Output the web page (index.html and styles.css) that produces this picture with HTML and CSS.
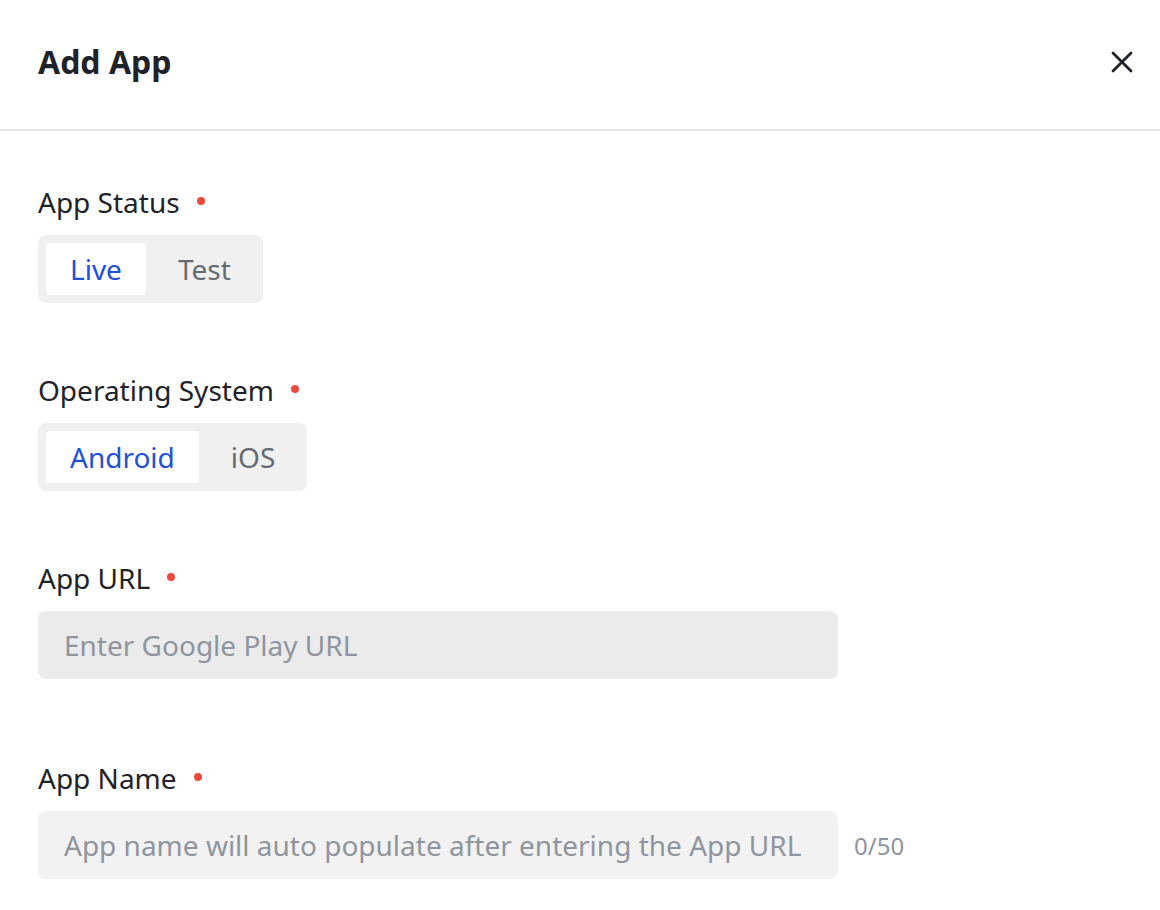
FILE: index.html
```html
<!DOCTYPE html>
<html lang="en">
<head>
<meta charset="UTF-8" />
<meta name="viewport" content="width=device-width, initial-scale=1" />
<title>Add App</title>
<link rel="stylesheet" href="styles.css">
</head>
<body>
  <div class="drawer">
    <div class="drawer-header">
      <h1>Add App</h1>
      <button class="close-btn" aria-label="Close">
        <svg width="22" height="22" viewBox="0 0 22 22">
          <path d="M2 2L20 20M20 2L2 20" stroke="#1f2329" stroke-width="2.8" stroke-linecap="round" />
        </svg>
      </button>
    </div>

    <div class="drawer-body">
      <div class="field">
        <label class="field-label">App Status <span class="required"></span></label>
        <div class="segmented">
          <button class="seg-item active">Live</button>
          <button class="seg-item">Test</button>
        </div>
      </div>

      <div class="field">
        <label class="field-label">Operating System <span class="required"></span></label>
        <div class="segmented">
          <button class="seg-item active">Android</button>
          <button class="seg-item">iOS</button>
        </div>
      </div>

      <div class="field field-url">
        <label class="field-label">App URL <span class="required"></span></label>
        <input type="text" class="text-input" placeholder="Enter Google Play URL" />
      </div>

      <div class="field">
        <label class="field-label">App Name <span class="required"></span></label>
        <div class="input-row">
          <input type="text" class="text-input light" placeholder="App name will auto populate after entering the App URL" />
          <span class="counter">0/50</span>
        </div>
      </div>
    </div>
  </div>
</body>
</html>
```

FILE: styles.css
```css
* {
  box-sizing: border-box;
}

body {
  margin: 0;
  font-family: 'Noto Sans', 'Open Sans', sans-serif;
  background: #fff;
  color: #1f2329;
}

.drawer-header {
  display: flex;
  align-items: center;
  justify-content: space-between;
  height: 131px;
  padding: 0 27px 6px 38px;
  border-bottom: 2px solid #e6e7e9;
}

.drawer-header h1 {
  margin: 0;
  font-size: 32px;
  font-weight: 700;
  color: #1f2329;
}

.close-btn {
  border: none;
  background: none;
  padding: 0;
  width: 22px;
  height: 22px;
  cursor: pointer;
}

.drawer-body {
  padding: 53px 38px 0;
}

.field {
  margin-bottom: 69px;
}

.field-url {
  margin-bottom: 81px;
}

.field-label {
  display: flex;
  align-items: center;
  height: 36px;
  margin-bottom: 15px;
  font-size: 28px;
  color: #1f2329;
}

.required {
  display: inline-block;
  width: 8px;
  height: 8px;
  margin-left: 17px;
  margin-top: -2px;
  border-radius: 50%;
  background: #ec4a3f;
}

.segmented {
  display: inline-flex;
  gap: 8px;
  padding: 8px;
  background: #f0f0f0;
  border-radius: 8px;
}

.seg-item {
  height: 52px;
  padding: 0 24px;
  border: none;
  border-radius: 4px;
  background: transparent;
  font-family: inherit;
  font-size: 28px;
  color: #646a73;
  cursor: pointer;
}

.seg-item.active {
  background: #fff;
  color: #2150d8;
}

.input-row {
  display: flex;
  align-items: center;
  gap: 16px;
}

.text-input {
  width: 800px;
  height: 68px;
  padding: 0 26px;
  border: none;
  border-radius: 8px;
  background: #ebebeb;
  font-family: inherit;
  font-size: 28px;
  color: #1f2329;
}

.text-input.light {
  background: #f2f2f2;
}

.text-input::placeholder {
  color: #8f959e;
}

.text-input:focus {
  outline: none;
}

.counter {
  font-size: 24px;
  color: #8f959e;
}
```
